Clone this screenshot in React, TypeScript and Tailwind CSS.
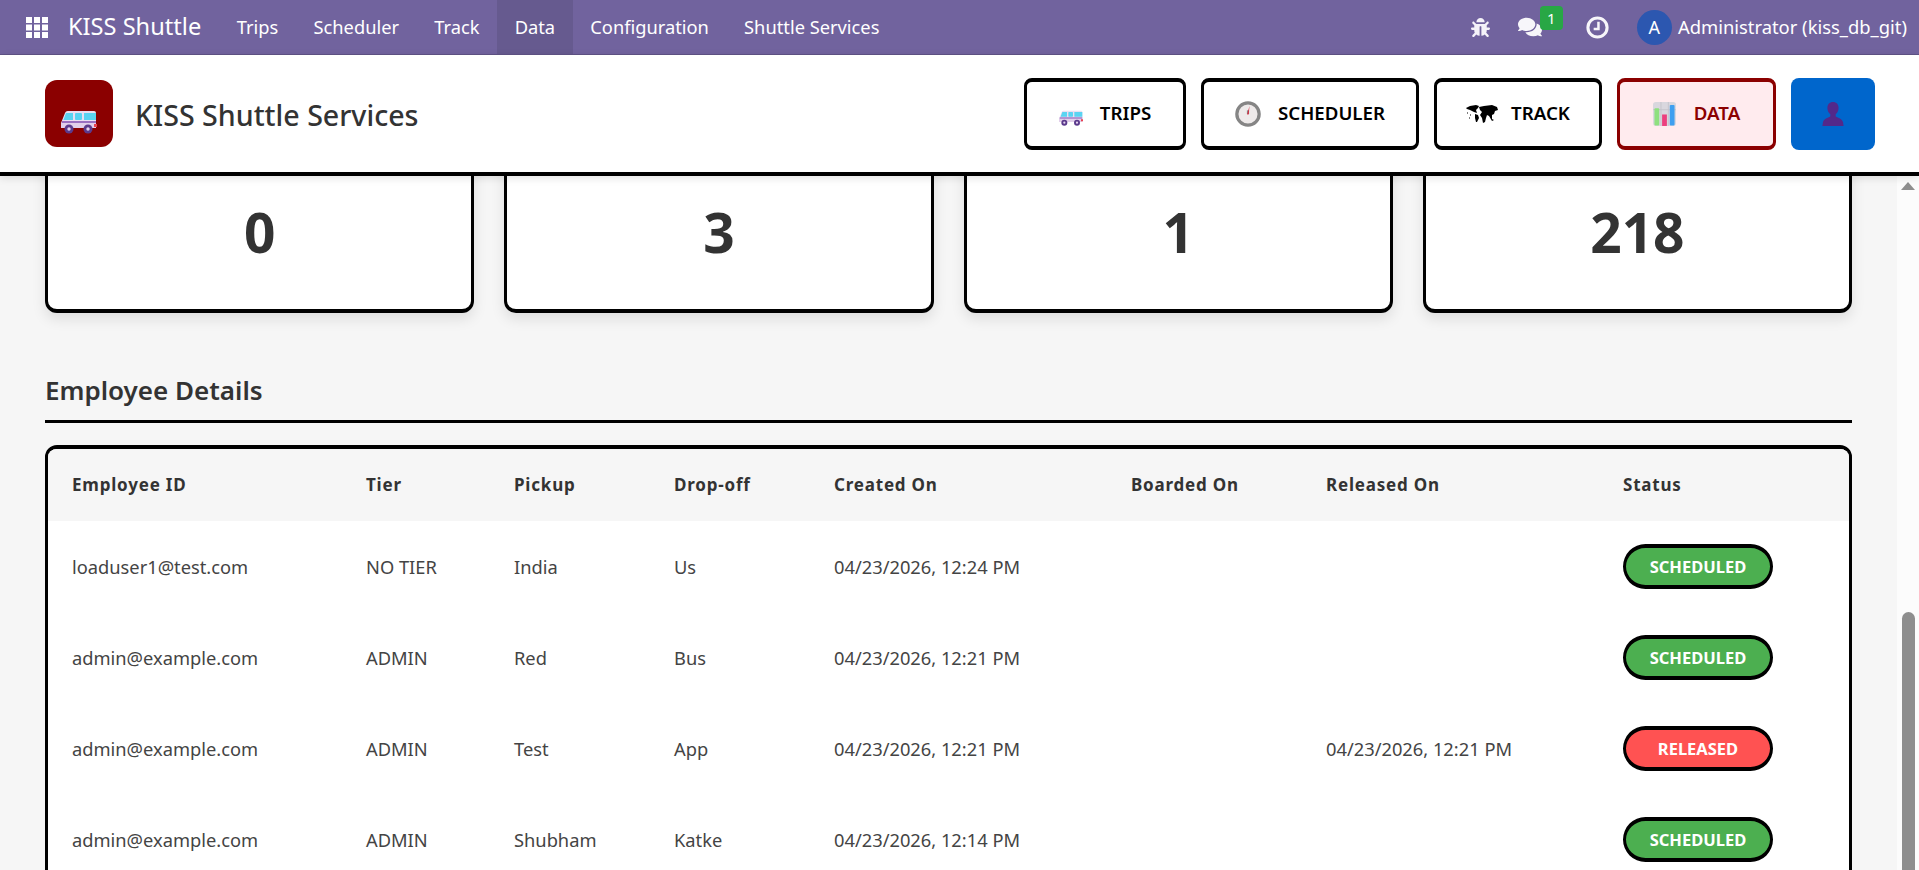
import React from 'react';
import { FaBug, FaComments } from 'react-icons/fa';

const BusIcon = ({ className }: { className?: string }) => (
  <svg viewBox="0 0 36 24" className={className}>
    <path d="M7 1h26a2 2 0 0 1 2 2v15H0v-5L4 3a3 3 0 0 1 3-2z" fill="#ebdff2" />
    <path d="M0 13h35v5H0z" fill="#e2cfea" />
    <path d="M1 11h34v2H1z" fill="#9a6fc0" />
    <path d="M5 3h7v7H2.4zM15 3h5a1 1 0 0 1 1 1v5a1 1 0 0 1-1 1h-5a1 1 0 0 1-1-1V4a1 1 0 0 1 1-1zM23 3h12v7H23z" fill="#5ad4f2" />
    <path d="M33 14h3v3h-3z" fill="#e8414f" />
    <circle cx="8" cy="19" r="4.5" fill="#5b3a8c" />
    <circle cx="8" cy="19" r="1.7" fill="#e4d3ee" />
    <circle cx="27" cy="19" r="4.5" fill="#5b3a8c" />
    <circle cx="27" cy="19" r="1.7" fill="#e4d3ee" />
  </svg>
);

const ClockIcon = () => (
  <svg viewBox="0 0 24 24" className="w-[26px] h-[26px]">
    <circle cx="12" cy="12" r="10.3" fill="#eeeaea" stroke="#858585" strokeWidth="3" />
    <path d="M12 12V8.6" stroke="#8a8a8a" strokeWidth="2" />
    <path d="M11.2 12.5 13.4 4.6 12.6 12.5z" fill="#d7263d" />
  </svg>
);

const NavClock = () => (
  <svg viewBox="0 0 24 24" className="ml-[44px] w-[23px] h-[23px]" fill="none" stroke="#f7f6fa">
    <circle cx="12" cy="12" r="10" strokeWidth="3.200" />
    <path d="M13 6v7.500H8" strokeWidth="2.600" />
  </svg>
);

const MapIcon = () => (
  <svg viewBox="0 0 32 18" className="w-[32px] h-[18px]">
    <path d="M0 3 4 1l6-1 3 1-1 2-2 2 1 3-3-1-2-1-2-1-3-1zM9 9l3 1 1 3-2 4-1 0-1-4zM1 7l1 1-1 1zM4 9l1 1-1 1zM3 12l1 1-1 1z" fill="#000" />
    <path d="M13 2l5-1 8-1 5 2 1 3-3 1-1 3-2 1 0 4 2 1-2 1-3-5-2-1-1 3-1 4-2 1-1-5-2-3 2-3-2-2z" fill="#000" />
  </svg>
);

const ChartIcon = () => (
  <svg viewBox="0 0 24 25" className="w-[23px] h-[24px]">
    <rect width="24" height="25" rx="3" fill="#d9d7de" />
    <path d="M8.3 0v25M16 0v25M0 8h24" stroke="#c2c0c8" strokeWidth="0.8" />
    <rect x="1.5" y="6.5" width="5" height="18" rx="1" fill="#8fe07f" />
    <rect x="9.5" y="13" width="5" height="12" fill="#ec3f7e" />
    <rect x="17.5" y="3" width="5" height="21.5" rx="1" fill="#3f9ff0" />
  </svg>
);

const PersonIcon = () => (
  <svg viewBox="0 0 22 24" className="w-[22px] h-[24px]">
    <path d="M11 0c3.4 0 5.6 2.4 5.6 5.8 0 2.600-1.100 5-2.900 6.400v2.300c2.600 1.200 6.400 2.400 7.300 5.500l.6 4H.4l.6-4c.9-3.100 4.700-4.300 7.300-5.500v-2.300C6.500 10.800 5.400 8.400 5.400 5.800 5.400 2.400 7.600 0 11 0z" fill="#53298a" />
  </svg>
);

const AppsIcon = () => (
  <svg viewBox="0 0 22 21" className="w-[22px] h-[21px]" fill="#fff">
    <rect x="0" y="0" width="6" height="6" />
    <rect x="8" y="0" width="6" height="6" />
    <rect x="16" y="0" width="6" height="6" />
    <rect x="0" y="7.500" width="6" height="6" />
    <rect x="8" y="7.500" width="6" height="6" />
    <rect x="16" y="7.500" width="6" height="6" />
    <rect x="0" y="15" width="6" height="6" />
    <rect x="8" y="15" width="6" height="6" />
    <rect x="16" y="15" width="6" height="6" />
  </svg>
);

const navItems = ['Trips', 'Scheduler', 'Track', 'Data', 'Configuration', 'Shuttle Services'];

const rows = [
  { id: 'loaduser1@test.com', tier: 'NO TIER', pickup: 'India', drop: 'Us', created: '04/23/2026, 12:24 PM', released: '', status: 'SCHEDULED' },
  { id: 'admin@example.com', tier: 'ADMIN', pickup: 'Red', drop: 'Bus', created: '04/23/2026, 12:21 PM', released: '', status: 'SCHEDULED' },
  { id: 'admin@example.com', tier: 'ADMIN', pickup: 'Test', drop: 'App', created: '04/23/2026, 12:21 PM', released: '04/23/2026, 12:21 PM', status: 'RELEASED' },
  { id: 'admin@example.com', tier: 'ADMIN', pickup: 'Shubham', drop: 'Katke', created: '04/23/2026, 12:14 PM', released: '', status: 'SCHEDULED' },
];

const headers = ['Employee ID', 'Tier', 'Pickup', 'Drop-off', 'Created On', 'Boarded On', 'Released On', 'Status'];

export default function App() {
  return (
    <div className="h-[870px] overflow-hidden flex flex-col bg-[#f6f6f6] font-['Noto_Sans',sans-serif]">
      {/* Top navbar */}
      <nav className="h-[55px] shrink-0 flex items-stretch bg-[#71639e] border-b border-[#5f5386] text-white pl-[26px] pr-[12px]">
        <div className="flex items-center"><AppsIcon /></div>
        <div className="flex items-center ml-[20px] mr-[18px] text-[23.600px]">KISS Shuttle</div>
        {navItems.map((item) => (
          <div key={item} className={`flex items-center px-[17.600px] text-[18.300px] ${item === 'Data' ? 'bg-[#665a8f]' : ''}`}>
            {item}
          </div>
        ))}
        <div className="ml-auto flex items-center">
          <FaBug className="w-[19px] h-[19px] text-[#f4f2f8]" />
          <div className="relative ml-[28px]">
            <FaComments className="w-[24px] h-[24px] text-[#f7f6fa]" />
            <span className="absolute left-[22px] -top-[9px] w-[23px] h-[24px] rounded-[4px] bg-[#28a745] text-[15px] flex items-center justify-center">1</span>
          </div>
          <NavClock />
          <div className="ml-[28px] w-[35px] h-[35px] rounded-full bg-[#2c57b0] flex items-center justify-center text-[18px]">A</div>
          <span className="ml-[6px] text-[18.400px]">Administrator (kiss_db_git)</span>
        </div>
      </nav>

      {/* Module header */}
      <header className="relative z-10 h-[121px] shrink-0 flex items-center bg-white border-b-[4px] border-black pl-[45px] pr-[44px] shadow-[0_2px_8px_rgba(0,0,0,0.12)]">
        <div className="w-[68px] h-[67px] rounded-[12px] bg-[#8b0000] flex items-end justify-center pb-[13px]">
          <BusIcon className="w-[36px] h-[24px]" />
        </div>
        <h1 className="ml-[22px] mt-[3px] text-[28.600px] font-medium text-[#333]">KISS Shuttle Services</h1>
        <div className="ml-auto flex gap-[15px] text-[18.700px] font-semibold text-black">
          <button className="w-[162px] h-[72px] flex items-center justify-center gap-[17px] border-x-[3px] border-y-[4px] border-black rounded-[8px] bg-white">
            <BusIcon className="w-[24px] h-[16px] mt-[9px]" />
            TRIPS
          </button>
          <button className="w-[218px] h-[72px] flex items-center justify-center gap-[17px] border-x-[3px] border-y-[4px] border-black rounded-[8px] bg-white">
            <ClockIcon />
            SCHEDULER
          </button>
          <button className="w-[168px] h-[72px] flex items-center justify-center gap-[13px] border-x-[3px] border-y-[4px] border-black rounded-[8px] bg-white">
            <MapIcon />
            TRACK
          </button>
          <button className="w-[159px] h-[72px] flex items-center justify-center gap-[18px] border-x-[3px] border-y-[4px] border-[#8b0000] rounded-[8px] bg-[#ffebee] text-[#8b0000]">
            <ChartIcon />
            DATA
          </button>
          <button className="w-[84px] h-[72px] flex items-center justify-center rounded-[8px] bg-[#0066cc]">
            <PersonIcon />
          </button>
        </div>
      </header>

      <div className="flex-1 min-h-0 flex">
        <main className="flex-1 min-w-0 px-[45px] overflow-hidden">
          {/* Stat cards, scrolled partly under the header */}
          <div className="grid grid-cols-4 gap-[30px] -mt-[64px]">
            {['0', '3', '1', '218'].map((value, i) => (
              <div key={i} className="h-[201px] flex items-end justify-center pb-[50px] bg-white border-x-[3px] border-y-[4px] border-black rounded-[12px] shadow-[0_6px_14px_rgba(0,0,0,0.1)]">
                <span className="text-[55px] leading-none font-bold text-[#333]">{value}</span>
              </div>
            ))}
          </div>

          <h2 className="mt-[60px] pb-[11px] h-[50px] leading-[34px] text-[26px] font-semibold text-[#333] border-b-[3px] border-black">Employee Details</h2>

          <div className="mt-[22px] bg-white border-x-[3px] border-y-[4px] border-black rounded-[12px] overflow-hidden">
            <table className="w-full table-fixed border-collapse">
              <colgroup>
                <col className="w-[294px]" />
                <col className="w-[148px]" />
                <col className="w-[160px]" />
                <col className="w-[160px]" />
                <col className="w-[297px]" />
                <col className="w-[195px]" />
                <col className="w-[297px]" />
                <col />
              </colgroup>
              <thead>
                <tr className="h-[72px] bg-[#f6f6f6]">
                  {headers.map((h) => (
                    <th key={h} className="pl-[24px] text-left text-[17px] font-bold tracking-[0.8px] text-[#333]">{h}</th>
                  ))}
                </tr>
              </thead>
              <tbody className="text-[18.300px] text-[#444]">
                {rows.map((row, i) => (
                  <tr key={i} className="h-[91px]">
                    <td className="pl-[24px]">{row.id}</td>
                    <td className="pl-[24px]">{row.tier}</td>
                    <td className="pl-[24px]">{row.pickup}</td>
                    <td className="pl-[24px]">{row.drop}</td>
                    <td className="pl-[24px]">{row.created}</td>
                    <td className="pl-[24px]"></td>
                    <td className="pl-[24px]">{row.released}</td>
                    <td className="pl-[24px]">
                      <span className={`w-[150px] h-[45px] pt-[2px] inline-flex items-center justify-center align-middle rounded-full border-x-[3px] border-y-[4px] border-black text-white text-[16.500px] font-bold ${row.status === 'RELEASED' ? 'bg-[#ff5252]' : 'bg-[#4caf50]'}`}>
                        {row.status}
                      </span>
                    </td>
                  </tr>
                ))}
              </tbody>
            </table>
          </div>
        </main>

        {/* Page scrollbar */}
        <div className="w-[22px] shrink-0 flex flex-col items-center bg-[#fcfcfc]">
          <div className="mt-[6px] w-0 h-0 border-x-[7px] border-x-transparent border-b-[8px] border-b-[#8e8e8e]" />
          <div className="mt-auto w-[13px] h-[258px] rounded-t-full bg-[#8e8e8e]" />
        </div>
      </div>
    </div>
  );
}
